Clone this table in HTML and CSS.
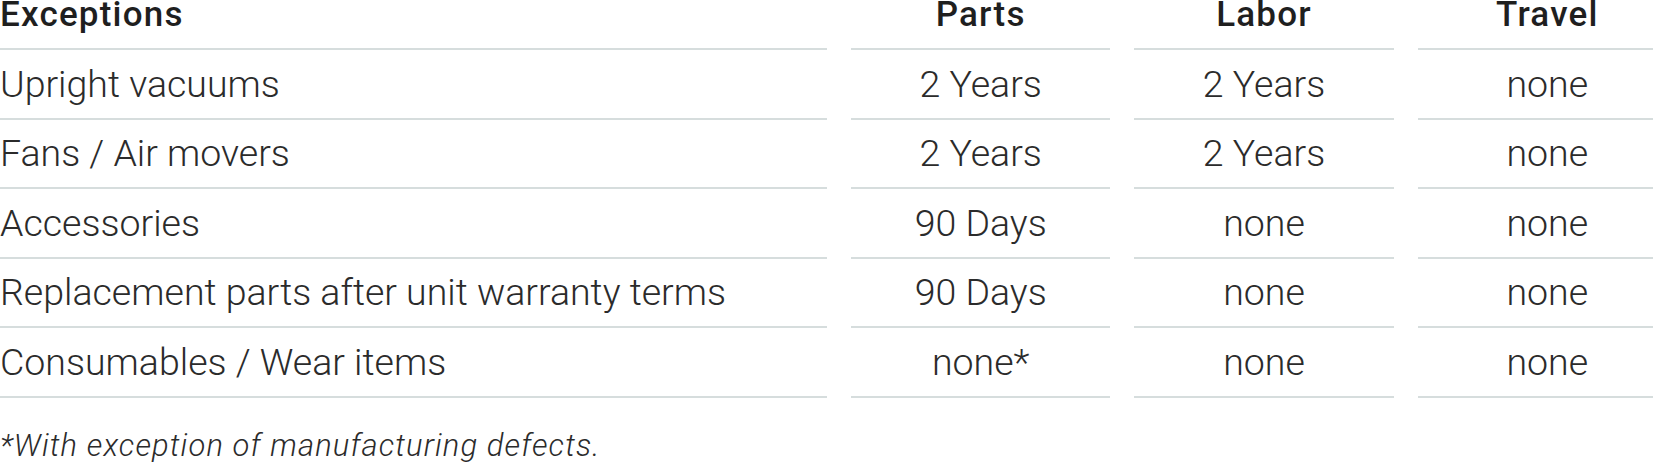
FILE: index.html
```html
<!DOCTYPE html>
<html lang="en">
<head>
<meta charset="utf-8">
<title>Warranty exceptions</title>
<link rel="stylesheet" href="styles.css">
</head>
<body>
<div class="wrap">
  <table class="warranty">
    <colgroup>
      <col class="c-name">
      <col class="c-val">
      <col class="c-val">
      <col class="c-val">
    </colgroup>
    <thead>
      <tr>
        <th class="name">Exceptions</th>
        <th>Parts</th>
        <th>Labor</th>
        <th>Travel</th>
      </tr>
    </thead>
    <tbody>
      <tr><td class="name">Upright vacuums</td><td>2 Years</td><td>2 Years</td><td>none</td></tr>
      <tr><td class="name">Fans / Air movers</td><td>2 Years</td><td>2 Years</td><td>none</td></tr>
      <tr><td class="name">Accessories</td><td>90 Days</td><td>none</td><td>none</td></tr>
      <tr><td class="name">Replacement parts after unit warranty terms</td><td>90 Days</td><td>none</td><td>none</td></tr>
      <tr><td class="name">Consumables / Wear items</td><td>none*</td><td>none</td><td>none</td></tr>
    </tbody>
  </table>
  <p class="note">*With exception of manufacturing defects.</p>
</div>
</body>
</html>
```

FILE: styles.css
```css
html, body {
  margin: 0;
  padding: 0;
  background: #ffffff;
  overflow: hidden;
}

body {
  font-family: "Roboto Light", Roboto, "Noto Sans", "Liberation Sans", sans-serif;
  color: #2b2b2b;
}

.wrap {
  width: 1700px;
}

.warranty {
  border-collapse: separate;
  border-spacing: 24px 0;
  margin: 0 0 0 -24px;
  table-layout: fixed;
  width: 1725px;
}

.c-name { width: 826px; }
.c-val { width: 259px; }

.warranty th,
.warranty td {
  border-bottom: 2px solid #d6dddd;
  text-align: center;
  padding: 0;
  white-space: nowrap;
}

.warranty th {
  font-family: Roboto, "Noto Sans", "Liberation Sans", sans-serif;
  font-weight: 500;
  font-size: 35px;
  letter-spacing: 1.2px;
  line-height: 30px;
  height: 48px;
  vertical-align: top;
  color: #1f1f1f;
}

.warranty td {
  font-weight: 300;
  font-size: 37.5px;
  height: 67.5px;
  vertical-align: middle;
}

.warranty .name {
  text-align: left;
}

.note {
  margin: 28px 0 0;
  font-size: 31px;
  font-weight: 300;
  font-style: italic;
  letter-spacing: 1.1px;
  line-height: 40px;
}
```
